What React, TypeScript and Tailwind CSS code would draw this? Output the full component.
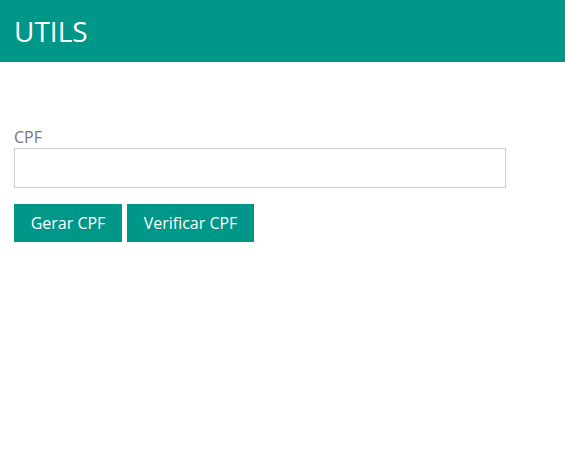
export default function App() {
  return (
    <div className="min-h-screen bg-white font-['Open_Sans',sans-serif]">
      <header className="h-[62px] bg-[#009688] flex items-center px-[14px]">
        <h1 className="text-[28px] text-white leading-none">UTILS</h1>
      </header>
      <main className="px-[14px] pt-[64px]">
        <label className="block text-[16px] leading-[22px] text-[#757575]">CPF</label>
        <input className="block w-[492px] h-[40px] border border-[#ccc] outline-none px-2" />
        <div className="flex gap-[5px] mt-[16px]">
          <button className="h-[38px] w-[108px] bg-[#009688] text-white text-[16px]">Gerar CPF</button>
          <button className="h-[38px] w-[127px] bg-[#009688] text-white text-[16px]">Verificar CPF</button>
        </div>
      </main>
    </div>
  );
}
